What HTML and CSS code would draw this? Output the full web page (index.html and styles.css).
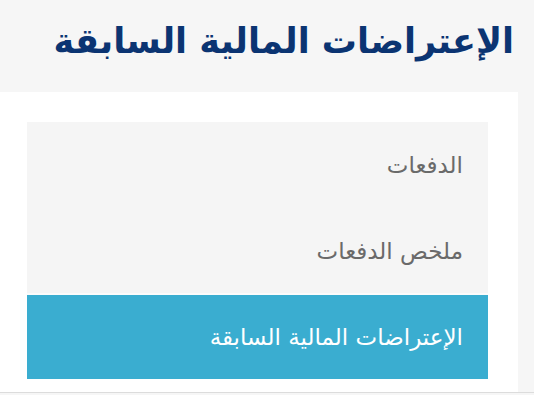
FILE: index.html
```html
<!DOCTYPE html>
<html lang="ar" dir="rtl">
<head>
<meta charset="utf-8">
<link rel="stylesheet" href="styles.css">
</head>
<body>
<header class="page-header">
  <h1 class="page-title">الإعتراضات المالية السابقة</h1>
</header>
<div class="content-row">
  <section class="panel">
    <nav class="menu">
      <a class="menu-item" href="#">الدفعات</a>
      <a class="menu-item last-plain" href="#">ملخص الدفعات</a>
      <a class="menu-item active" href="#">الإعتراضات المالية السابقة</a>
    </nav>
  </section>
</div>
</body>
</html>
```
FILE: styles.css
```css
html, body {
  margin: 0;
  padding: 0;
}
body {
  background: #f6f6f6;
  font-family: "DejaVu Sans", "Noto Sans", sans-serif;
  width: 534px;
  height: 395px;
  overflow: hidden;
}
.page-header {
  height: 92px;
  display: flex;
  align-items: center;
  padding-right: 20px;
  box-sizing: border-box;
}
.page-title {
  margin: 0;
  font-size: 35px;
  font-weight: bold;
  color: #0b3472;
  line-height: 1;
  padding-bottom: 10px;
}
.content-row {
  display: flex;
  border-bottom: 1px solid #dcdcdc;
}
.panel {
  background: #ffffff;
  width: 518px;
  height: 300px;
  margin-right: 16px;
  box-sizing: border-box;
  padding: 30px 30px 0 30px;
}
.menu {
  display: flex;
  flex-direction: column;
  background: #f5f5f5;
  width: 461px;
}
.menu-item {
  display: flex;
  align-items: center;
  height: 86px;
  padding-right: 25px;
  font-size: 23px;
  color: #6a6a6a;
  text-decoration: none;
}
.menu-item.last-plain {
  height: 85px;
  border-bottom: 2px solid #fbfbfb;
}
.menu-item.active {
  background: #3aadd0;
  color: #ffffff;
  height: 84px;
}
```
